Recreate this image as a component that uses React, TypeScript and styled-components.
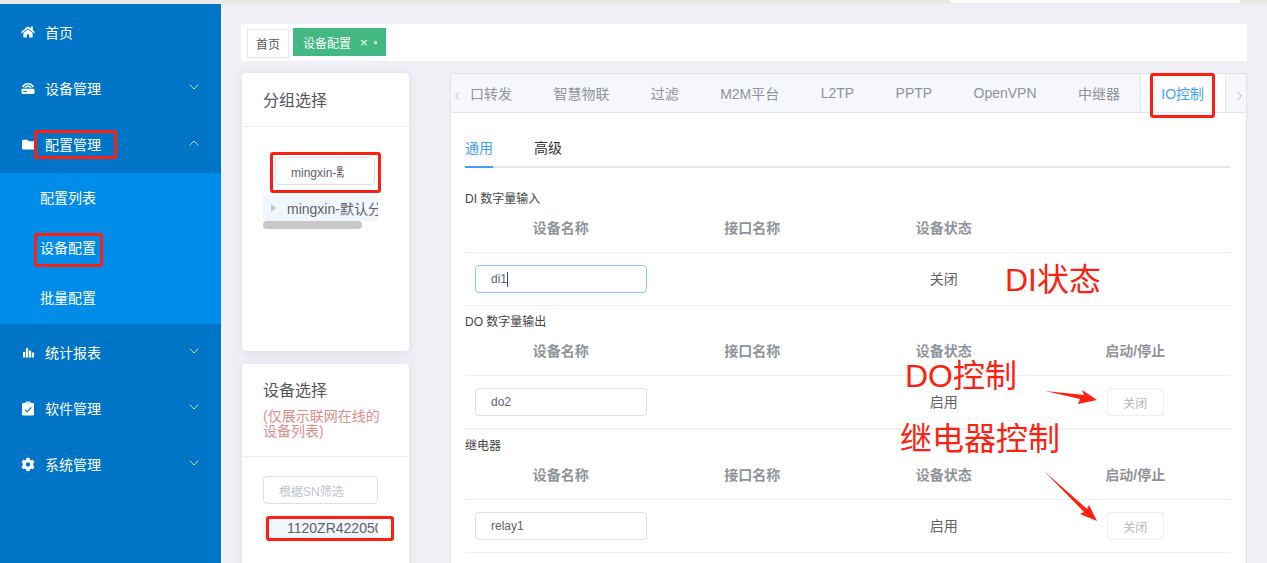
import React from "react";
import styled, { createGlobalStyle } from "styled-components";
import { ChevronDown, ChevronUp, ChevronLeft, ChevronRight } from "lucide-react";
import { FaHome, FaFolder, FaCog } from "react-icons/fa";

const FONT = `"Liberation Sans", "Noto Sans CJK SC", sans-serif`;

const Global = createGlobalStyle`
  html, body { margin: 0; padding: 0; background: #eff0f5; }
  body { font-family: ${FONT}; }
  * { box-sizing: border-box; }
`;

const Page = styled.div`
  position: relative;
  width: 1267px;
  height: 563px;
  overflow: hidden;
  display: flex;
  flex-direction: column;
  background: #eff0f5;
`;

const TopStrip = styled.div`
  flex: 0 0 4px;
  background: #e9e9e7;
  display: flex;
  justify-content: flex-end;
  padding-right: 27px;
`;

const TopPill = styled.div`
  width: 290px;
  height: 3px;
  background: #fff;
  border-radius: 0 0 10px 10px;
`;

const Body = styled.div`
  flex: 1;
  display: flex;
  min-height: 0;
`;

const Sidebar = styled.nav`
  flex: 0 0 221px;
  background: #0074c7;
  padding-top: 1px;
  margin-right: 1px;
  box-shadow: 1px 0 0 #f6f7fa;
`;

const MenuItem = styled.div<{ $lift?: boolean }>`
  height: 56px;
  display: flex;
  align-items: center;
  padding: 0 19px ${(p) => (p.$lift ? "2px" : "0")} 21px;
  color: #fff;
  font-size: 14px;
`;

const MenuIcon = styled.span`
  width: 14px;
  height: 14px;
  margin-right: 10px;
  display: flex;
  align-items: center;
  justify-content: center;
  color: #fff;
`;

const MenuLabel = styled.span`
  flex: 1;
`;

const MenuCaret = styled.span`
  display: flex;
  margin-top: -2px;
  color: #e6f2fb;
`;

const SubMenu = styled.div`
  background: #008ce9;
  padding-bottom: 1px;
`;

const SubItem = styled.div`
  height: 50px;
  display: flex;
  align-items: center;
  padding: 0 0 2px 40px;
  color: #fff;
  font-size: 14px;
`;

const Main = styled.main`
  flex: 1;
  min-width: 0;
  padding: 20px 20px 0 19px;
  display: flex;
  flex-direction: column;
`;

const TagBar = styled.div`
  flex: 0 0 37px;
  background: #fff;
  display: flex;
  align-items: flex-start;
  gap: 4px;
  padding: 4px 0 0 6px;
`;

const PlainTag = styled.div`
  height: 29px;
  margin-top: 1px;
  padding: 0 8px;
  border: 1px solid #e6e7eb;
  font-size: 12px;
  color: #555;
  display: flex;
  align-items: center;
`;

const ActiveTag = styled.div`
  height: 28px;
  width: 93px;
  padding-left: 10px;
  background: #42b983;
  color: #fff;
  font-size: 12px;
  display: flex;
  align-items: center;
`;

const TagClose = styled.span`
  margin-left: 9px;
  font-size: 13px;
`;

const TagDot = styled.span`
  width: 3px;
  height: 3px;
  margin-left: 6px;
  border-radius: 50%;
  background: #fff;
`;

const Content = styled.div`
  flex: 1;
  min-height: 0;
  margin-top: 12px;
  display: flex;
  gap: 41px;
  padding-left: 1px;
`;

const LeftColumn = styled.div`
  flex: 0 0 167px;
  width: 167px;
  min-width: 0;
  display: flex;
  flex-direction: column;
  gap: 13px;
`;

const SideCard = styled.section<{ $height: number }>`
  flex: 0 0 ${(p) => p.$height}px;
  background: #fff;
  border-radius: 4px;
  box-shadow: 0 2px 12px rgba(0, 0, 0, 0.08);
  overflow: hidden;
`;

const CardHeader = styled.header<{ $height: number; $top: number }>`
  height: ${(p) => p.$height}px;
  padding: ${(p) => p.$top}px 21px 0;
  border-bottom: 1px solid #ebeef5;
`;

const CardTitle = styled.h3`
  margin: 0;
  font-size: 16px;
  line-height: 24px;
  font-weight: 400;
  color: #555;
`;

const CardNote = styled.p`
  margin: 6px 0 0;
  font-size: 14px;
  line-height: 15px;
  color: #e08d8d;
  width: 120px;
`;

const CardBody = styled.div<{ $top: number }>`
  padding: ${(p) => p.$top}px 31px 0 21px;
`;

const Field = styled.div<{ $width?: number; $focused?: boolean; $muted?: boolean }>`
  width: ${(p) => (p.$width ? `${p.$width}px` : "100%")};
  height: 28px;
  padding-left: 15px;
  border: 1px solid ${(p) => (p.$focused ? "#8cc5ff" : "#dcdfe6")};
  border-radius: 4px;
  background: #fff;
  font-size: 12px;
  color: ${(p) => (p.$muted ? "#c0c4cc" : "#606266")};
  display: flex;
  align-items: center;
  overflow: hidden;
  white-space: nowrap;
`;

const GroupField = styled(Field)`
  width: 100px;
  margin-left: 12px;
`;

const GroupValue = styled.span`
  width: 53px;
  overflow: hidden;
`;

const Caret = styled.span`
  width: 1px;
  height: 15px;
  background: #444;
`;

const TreeRow = styled.div`
  height: 26px;
  margin-top: 10px;
  background: #f0f6fe;
  color: #606266;
  font-size: 14px;
  display: flex;
  align-items: center;
  padding-left: 8px;
  overflow: hidden;
  white-space: nowrap;
`;

const TreeArrow = styled.span`
  flex: none;
  width: 0;
  height: 0;
  margin-right: 11px;
  border-left: 5px solid #c0c4cc;
  border-top: 4px solid transparent;
  border-bottom: 4px solid transparent;
`;

const ScrollThumb = styled.div`
  width: 99px;
  height: 8px;
  background: #c8c8c8;
  border-radius: 4px;
`;

const SerialRow = styled.div`
  height: 25px;
  margin-top: 11px;
  background: #f0f6fe;
  color: #606266;
  font-size: 14px;
  display: flex;
  align-items: center;
  padding-left: 24px;
  overflow: hidden;
  white-space: nowrap;
`;

const ConfigCard = styled.section`
  flex: 1;
  min-width: 0;
  background: #fff;
  border: 1px solid #dfe2e8;
  border-bottom: 0;
  display: flex;
  flex-direction: column;
`;

const TabHeader = styled.div`
  flex: 0 0 38px;
  display: flex;
  background: #f5f7fa;
  border-bottom: 1px solid #e4e7ed;
`;

const TabArrowLeft = styled.div`
  flex: 0 0 19px;
  display: flex;
  align-items: center;
  justify-content: flex-start;
  color: #909399;
  padding-top: 5px;
`;

const TabArrowRight = styled.div`
  flex: 1;
  min-width: 0;
  display: flex;
  align-items: center;
  justify-content: flex-start;
  color: #909399;
  padding: 5px 0 0 7px;
  border-left: 1px solid #e4e7ed;
`;

const TabItem = styled.div<{ $active?: boolean; $first?: boolean }>`
  height: ${(p) => (p.$active ? "38px" : "37px")};
  padding: 0 20.4px 0 ${(p) => (p.$first ? "0" : "20px")};
  display: flex;
  align-items: center;
  font-size: 14px;
  white-space: nowrap;
  color: ${(p) => (p.$active ? "#409eff" : "#909399")};
  background: ${(p) => (p.$active ? "#fff" : "transparent")};
  border-left: ${(p) => (p.$first ? "0" : `1px solid ${p.$active ? "#e4e7ed" : "transparent"}`)};
`;

const ConfigBody = styled.div`
  padding: 15px 15px 0 14px;
`;

const SubTabs = styled.div`
  height: 40px;
  display: flex;
  border-bottom: 2px solid #e4e7ed;
`;

const SubTab = styled.div<{ $active?: boolean }>`
  height: 40px;
  margin-right: 41px;
  font-size: 14px;
  line-height: 20px;
  padding-top: 10px;
  color: ${(p) => (p.$active ? "#409eff" : "#303133")};
  border-bottom: 2px solid ${(p) => (p.$active ? "#409eff" : "transparent")};
`;

const SectionLabel = styled.div<{ $first?: boolean }>`
  height: 30px;
  margin-top: ${(p) => (p.$first ? "15px" : "0")};
  padding-bottom: 2px;
  display: flex;
  align-items: center;
  font-size: 12px;
  color: #444;
`;

const Grid = styled.div`
  display: grid;
  grid-template-columns: repeat(4, 1fr);
`;

const HeadRow = styled(Grid)`
  height: 40px;
  padding-top: 5px;
  border-bottom: 1px solid #ebeef5;
`;

const HeadCell = styled.div`
  font-size: 14px;
  line-height: 20px;
  font-weight: 700;
  color: #909399;
  text-align: center;
`;

const DataRow = styled(Grid)<{ $thick?: boolean }>`
  height: ${(p) => (p.$thick ? "54px" : "53px")};
  align-items: center;
  border-bottom: ${(p) => (p.$thick ? "2px solid #f0f1f6" : "1px solid #ebeef5")};
`;

const NameCell = styled.div`
  padding-left: 10px;
`;

const StatusCell = styled.div`
  font-size: 14px;
  padding-bottom: 2px;
  color: #606266;
  text-align: center;
`;

const ActionCell = styled.div`
  display: flex;
  justify-content: center;
`;

const OffButton = styled.button`
  width: 57px;
  height: 28px;
  padding: 0;
  background: #fff;
  border: 1px solid #ebeef5;
  border-radius: 3px;
  font-family: ${FONT};
  font-size: 12px;
  color: #b4b7bd;
`;

const MarkBox = styled.div<{ $x: number; $y: number; $w: number; $h: number }>`
  position: absolute;
  left: ${(p) => p.$x}px;
  top: ${(p) => p.$y}px;
  width: ${(p) => p.$w}px;
  height: ${(p) => p.$h}px;
  border: 3px solid #ff1f10;
  border-radius: 3px;
  pointer-events: none;
`;

const MarkText = styled.div<{ $x: number; $y: number }>`
  position: absolute;
  left: ${(p) => p.$x}px;
  top: ${(p) => p.$y}px;
  font-family: ${FONT};
  font-size: 32px;
  line-height: 32px;
  font-weight: 400;
  color: #ff1f10;
  white-space: nowrap;
`;

const ArrowLayer = styled.svg`
  position: absolute;
  left: 1040px;
  top: 385px;
  pointer-events: none;
`;

const RouterIcon = () => (
  <svg width="14" height="14" viewBox="0 0 14 14" fill="none">
    <path d="M1.6 6.2a6 6 0 0 1 10.8 0" stroke="#fff" strokeWidth="1.5" />
    <path d="M4 7a3.4 3.4 0 0 1 6 0" stroke="#fff" strokeWidth="1.5" />
    <rect x="0.5" y="7.8" width="13" height="5.2" rx="1" fill="#fff" />
    <rect x="2.4" y="9.9" width="3.6" height="1" fill="#0074c7" />
  </svg>
);

const BarsIcon = () => (
  <svg width="11" height="11" viewBox="0 0 11 11" fill="#fff">
    <rect x="0" y="5" width="2.2" height="5.5" />
    <rect x="2.9" y="1" width="2.3" height="9.5" />
    <rect x="5.9" y="3.5" width="2.2" height="7" />
    <rect x="8.8" y="5.5" width="2.2" height="5" />
  </svg>
);

const ClipboardIcon = () => (
  <svg width="14" height="15" viewBox="0 0 14 15">
    <rect x="1" y="2" width="12" height="12.6" rx="1" fill="#fff" />
    <rect x="4.4" y="0.4" width="5.2" height="3.2" rx="0.8" fill="#d7e8f6" />
    <path d="M4 8.6l2.2 2.2 4-4.4" fill="none" stroke="#0074c7" strokeWidth="1.2" />
  </svg>
);

const columns = ["设备名称", "接口名称", "设备状态", "启动/停止"];
const tabs = ["智慧物联", "过滤", "M2M平台", "L2TP", "PPTP", "OpenVPN", "中继器"];

type Row = { label: string; name: string; status: string; focused?: boolean; action?: boolean; thick?: boolean };

const sections: Row[] = [
  { label: "DI 数字量输入", name: "di1", status: "关闭", focused: true },
  { label: "DO 数字量输出", name: "do2", status: "启用", action: true, thick: true },
  { label: "继电器", name: "relay1", status: "启用", action: true },
];

const collapsed = [
  { icon: <BarsIcon />, label: "统计报表" },
  { icon: <ClipboardIcon />, label: "软件管理" },
  { icon: <FaCog size={15} />, label: "系统管理" },
];

export default function App() {
  return (
    <Page>
      <Global />
      <TopStrip>
        <TopPill />
      </TopStrip>
      <Body>
        <Sidebar>
          <MenuItem $lift>
            <MenuIcon><FaHome size={14} /></MenuIcon>
            <MenuLabel>首页</MenuLabel>
          </MenuItem>
          <MenuItem $lift>
            <MenuIcon><RouterIcon /></MenuIcon>
            <MenuLabel>设备管理</MenuLabel>
            <MenuCaret><ChevronDown size={16} strokeWidth={1.3} /></MenuCaret>
          </MenuItem>
          <MenuItem $lift>
            <MenuIcon><FaFolder size={13} /></MenuIcon>
            <MenuLabel>配置管理</MenuLabel>
            <MenuCaret><ChevronUp size={16} strokeWidth={1.3} /></MenuCaret>
          </MenuItem>
          <SubMenu>
            <SubItem>配置列表</SubItem>
            <SubItem>设备配置</SubItem>
            <SubItem>批量配置</SubItem>
          </SubMenu>
          {collapsed.map((item) => (
            <MenuItem key={item.label}>
              <MenuIcon>{item.icon}</MenuIcon>
              <MenuLabel>{item.label}</MenuLabel>
              <MenuCaret><ChevronDown size={16} strokeWidth={1.3} /></MenuCaret>
            </MenuItem>
          ))}
        </Sidebar>
        <Main>
          <TagBar>
            <PlainTag>首页</PlainTag>
            <ActiveTag>
              设备配置
              <TagClose>×</TagClose>
              <TagDot />
            </ActiveTag>
          </TagBar>
          <Content>
            <LeftColumn>
              <SideCard $height={278}>
                <CardHeader $height={54} $top={16}>
                  <CardTitle>分组选择</CardTitle>
                </CardHeader>
                <CardBody $top={30}>
                  <GroupField><GroupValue>mingxin-默</GroupValue></GroupField>
                  <TreeRow>
                    <TreeArrow />
                    mingxin-默认分组
                  </TreeRow>
                  <ScrollThumb />
                </CardBody>
              </SideCard>
              <SideCard $height={220}>
                <CardHeader $height={93} $top={15}>
                  <CardTitle>设备选择</CardTitle>
                  <CardNote>(仅展示联网在线的设备列表)</CardNote>
                </CardHeader>
                <CardBody $top={19}>
                  <Field $muted>根据SN筛选</Field>
                  <SerialRow>1120ZR4220500123</SerialRow>
                </CardBody>
              </SideCard>
            </LeftColumn>
            <ConfigCard>
              <TabHeader>
                <TabArrowLeft><ChevronLeft size={12} strokeWidth={1.4} /></TabArrowLeft>
                <TabItem $first>口转发</TabItem>
                {tabs.map((t) => (
                  <TabItem key={t}>{t}</TabItem>
                ))}
                <TabItem $active>IO控制</TabItem>
                <TabArrowRight><ChevronRight size={14} strokeWidth={1.3} /></TabArrowRight>
              </TabHeader>
              <ConfigBody>
                <SubTabs>
                  <SubTab $active>通用</SubTab>
                  <SubTab>高级</SubTab>
                </SubTabs>
                {sections.map((s, i) => (
                  <div key={s.label}>
                    <SectionLabel $first={i === 0}>{s.label}</SectionLabel>
                    <HeadRow>
                      {columns.map((c, ci) => (
                        <HeadCell key={c}>{ci === 3 && !s.action ? "" : c}</HeadCell>
                      ))}
                    </HeadRow>
                    <DataRow $thick={s.thick}>
                      <NameCell>
                        <Field $width={172} $focused={s.focused}>
                          {s.name}
                          {s.focused && <Caret />}
                        </Field>
                      </NameCell>
                      <div />
                      <StatusCell>{s.status}</StatusCell>
                      <ActionCell>{s.action && <OffButton>关闭</OffButton>}</ActionCell>
                    </DataRow>
                  </div>
                ))}
              </ConfigBody>
            </ConfigCard>
          </Content>
        </Main>
      </Body>

      <MarkBox $x={34} $y={130} $w={83} $h={29} />
      <MarkBox $x={34} $y={233} $w={69} $h={34} />
      <MarkBox $x={270} $y={152} $w={111} $h={41} />
      <MarkBox $x={266} $y={516} $w={128} $h={25} />
      <MarkBox $x={1150} $y={73} $w={65} $h={45} />
      <MarkText $x={1005} $y={264}>DI状态</MarkText>
      <MarkText $x={905} $y={360}>DO控制</MarkText>
      <MarkText $x={900} $y={423}>继电器控制</MarkText>
      <ArrowLayer width="60" height="140" viewBox="0 0 60 140">
        <polygon points="5,6 44,10 42,5 57,15 38,19 40,14" fill="#ff1f10" />
        <polygon points="4,86 47,124 49,120 57,136 40,129 44,127" fill="#ff1f10" />
      </ArrowLayer>
    </Page>
  );
}
